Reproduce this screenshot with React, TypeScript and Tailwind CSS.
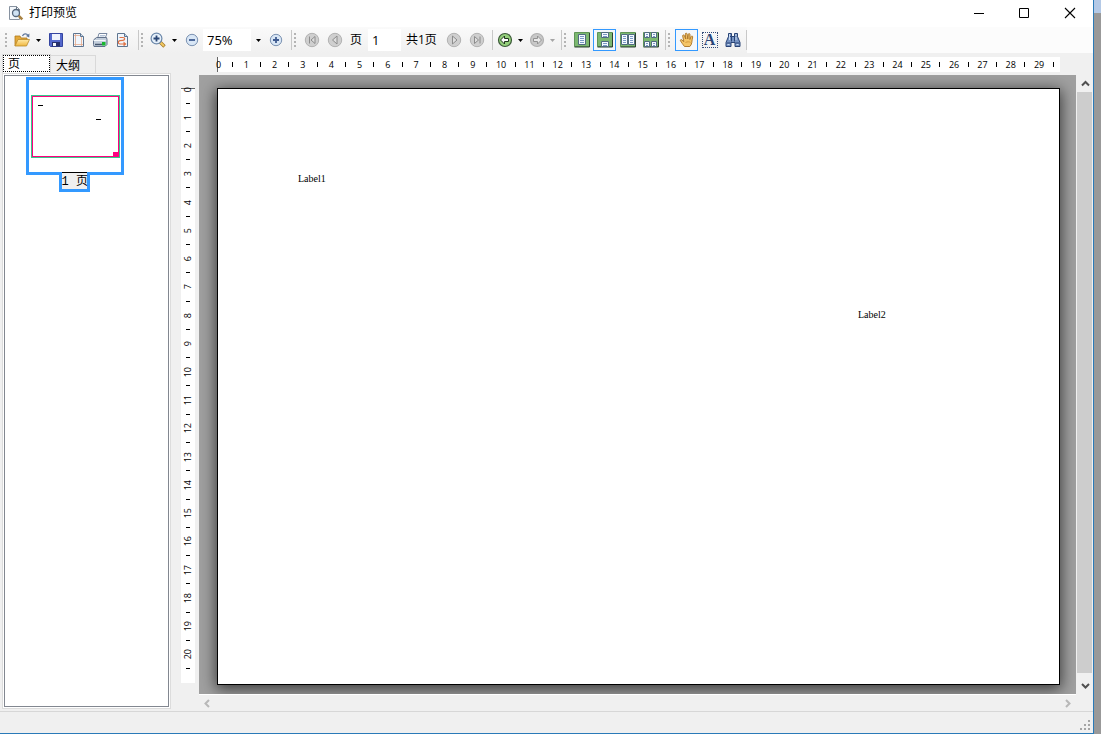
import React, { useState } from "react";

const UI = "font-['Open_Sans','Noto_Sans_CJK_SC',sans-serif]";

function Grip() {
  return (
    <span aria-hidden className="mx-px flex h-4 w-1 flex-col justify-between py-px">
      {[0, 1, 2, 3].map((i) => (
        <span key={i} className="h-0.5 w-0.5 bg-[#b4b4b4]" />
      ))}
    </span>
  );
}

function Separator() {
  return <span aria-hidden className="h-5 w-px shrink-0 bg-[#c8c8c8]" />;
}

function ToolButton({ label, active = false, disabled = false, children }: { label: string; active?: boolean; disabled?: boolean; children: React.ReactNode }) {
  return (
    <button
      type="button"
      aria-label={label}
      title={label}
      disabled={disabled}
      className={
        active
          ? "flex h-[22px] w-[23px] shrink-0 items-center justify-center border border-[#3399ff] bg-[#f4f8fc]"
          : "flex h-[22px] w-[23px] shrink-0 items-center justify-center"
      }
    >
      {children}
    </button>
  );
}

function Caret({ label, disabled = false }: { label: string; disabled?: boolean }) {
  return (
    <button type="button" aria-label={label} disabled={disabled} className="flex h-[22px] w-[11px] shrink-0 items-center justify-center">
      <svg width="5" height="3" viewBox="0 0 5 3">
        <path d="M0 0h5L2.500 3z" fill={disabled ? "#a5a5a5" : "#000"} />
      </svg>
    </button>
  );
}

function Svg({ children }: { children: React.ReactNode }) {
  return (
    <svg width="16" height="16" viewBox="0 0 16 16" fill="none" className="shrink-0">
      {children}
    </svg>
  );
}

function AppIcon() {
  return (
    <Svg>
      <path d="M1.500 1.500h7l3 3v10h-10z" fill="#f4f8fc" stroke="#8792a0" />
      <path d="M8.500 1.500v3h3" stroke="#6f7b87" />
      <circle cx="8" cy="8" r="3.500" fill="#cfe2f3" stroke="#55677c" strokeWidth="1.300" />
      <path d="m10.800 10.800 3.500 3.500" stroke="#a88243" strokeWidth="2.600" />
    </Svg>
  );
}

function OpenIcon() {
  return (
    <Svg>
      <path d="M1 14V4h5l1 2h6v3" fill="#e3a83a" stroke="#b07a1b" strokeWidth=".8" />
      <path d="m1 14 3-6.500h11.500L12.500 14z" fill="url(#folder)" stroke="#b98a2c" strokeWidth=".8" />
      <path d="M8.500 4c1-2.500 4-3 5.500-.5" stroke="#61789c" strokeWidth="1.300" />
      <path d="m15.500 1.500-.3 4-3.200-1.500z" fill="#61789c" />
      <defs>
        <linearGradient id="folder" x1="0" y1="0" x2="0" y2="1">
          <stop stopColor="#ffe9a6" />
          <stop offset="1" stopColor="#f0b73f" />
        </linearGradient>
      </defs>
    </Svg>
  );
}

function SaveIcon() {
  return (
    <Svg>
      <path d="M1.500 1.500h13v13h-12l-1-1z" fill="#5468cc" stroke="#3444a0" />
      <path d="M4 2h8v6H4z" fill="#eef2fc" />
      <path d="M4 10h8v4.500H4z" fill="#26306c" />
      <path d="M5 11h3v3H5z" fill="#f4f6fc" />
    </Svg>
  );
}

function PageSetupIcon() {
  return (
    <Svg>
      <path d="M3.500 1.500h7l3 3v10h-10z" fill="#f1f6fc" stroke="#5e7590" />
      <path d="M10.500 1.500v3h3" fill="#c8d8e8" stroke="#5e7590" />
      <path d="M5.500 2v12M11.500 5v9M4 3.500h6M4 12.500h9" stroke="#e5a98a" strokeWidth=".8" />
    </Svg>
  );
}

function PrintIcon() {
  return (
    <Svg>
      <path d="M5.500 6.500 7 1.500h8l-2 5z" fill="#fff" stroke="#7787a0" />
      <path d="M8 3.500h5M7.500 5h5" stroke="#9fb2cc" strokeWidth=".8" />
      <path d="m1.500 8 3-2.500h10l.5 2v5l-2 2h-11l-.5-2z" fill="#c3cedb" stroke="#61718a" />
      <path d="M1.500 8.500h12" stroke="#f5f8fb" />
      <path d="M3 12.500h7" stroke="#46566d" strokeWidth="1.500" />
      <path d="M10 10h3.500v3.500H10z" fill="#18b62f" />
    </Svg>
  );
}

function ExportIcon() {
  return (
    <Svg>
      <path d="M3.500 1.500h7l3 3v10h-10z" fill="#f1f6fc" stroke="#5e7590" />
      <path d="M10.500 1.500v3h3" fill="#c8d8e8" stroke="#5e7590" />
      <path d="M5.500 5.500H9c2.300 0 2.300 2.500 0 2.800l-3 .4c-2.500.5-2 3.300 0 3.300h4" stroke="#df7345" strokeWidth="1.200" />
      <path d="m9.500 9.500 3 2.500-3 2.500z" fill="#df7345" />
    </Svg>
  );
}

function ZoomIcon() {
  return (
    <Svg>
      <path d="m10 10 4.500 4.500" stroke="#a57b2b" strokeWidth="3.400" />
      <path d="m10.500 10.500 3.500 3.500" stroke="#f3ca63" strokeWidth="1.800" />
      <circle cx="6.500" cy="6.500" r="5.400" fill="#e6f0fa" stroke="#6b87a9" strokeWidth="1.200" />
      <path d="M3.500 6.500h6M6.500 3.500v6" stroke="#2a4675" strokeWidth="1.800" />
    </Svg>
  );
}

function StepIcon({ plus = false }: { plus?: boolean }) {
  return (
    <Svg>
      <circle cx="8" cy="8" r="5.700" fill="#d8e6f5" stroke="#7b92b2" />
      <path d={plus ? "M5 8h6M8 5v6" : "M5 8h6"} stroke="#3f5b90" strokeWidth="1.800" />
    </Svg>
  );
}

function NavIcon({ kind }: { kind: "first" | "prev" | "next" | "last" }) {
  const paths = {
    first: "M5.500 4.500v7M11 4.500v7L7 8z",
    prev: "M10 4v8L5.500 8z",
    next: "M6.500 4v8L11 8z",
    last: "M5.500 4.500v7l4-3.500zM11 4.500v7",
  };
  return (
    <Svg>
      <circle cx="8" cy="8" r="6.700" fill="#cfcfcf" stroke="#b2b2b2" />
      <path d={paths[kind]} fill="#dedede" stroke="#8c8c8c" />
    </Svg>
  );
}

function HistoryIcon({ forward = false }: { forward?: boolean }) {
  return (
    <Svg>
      <circle cx="8" cy="8" r="6.500" fill={forward ? "#c8c8c8" : "#94cf7b"} stroke={forward ? "#b0b0b0" : "#3c5a39"} strokeWidth="1.200" />
      <path
        d={forward ? "M12.500 8 8.500 4v2.500h-4v3h4V12z" : "M3.500 8l4-4v2.500h4v3h-4V12z"}
        fill={forward ? "#e9e9e9" : "#fff"}
        stroke={forward ? "#929292" : "#20351f"}
      />
    </Svg>
  );
}

function LayoutIcon({ kind }: { kind: "single" | "continuous" | "facing" | "facingContinuous" }) {
  const pages = {
    single: [[4.5, 2.5, 7, 10]],
    continuous: [[4.5, 0.5, 7, 5], [4.5, 9.5, 7, 5]],
    facing: [[1.5, 2.5, 6, 10], [8.5, 2.5, 6, 10]],
    facingContinuous: [[1.5, 0.5, 5, 5], [8.5, 0.5, 5, 5], [1.5, 9.5, 5, 5], [8.5, 9.5, 5, 5]],
  }[kind];
  return (
    <Svg>
      <path d="M.5.500h15v14H.5z" fill="#7cb870" stroke="#5f9457" />
      <path d="M.5 15h15V1" stroke="#2c4232" />
      {pages.map(([x, y, w, h]) => (
        <g key={`${x}-${y}`}>
          <path d={`M${x} ${y}h${w}v${h}h-${w}z`} fill="#f5f9ff" stroke="#506a80" />
          {[2, 4, 6, 8].filter((n) => n < h).map((n) => (
            <path key={n} d={`M${x + 1.5} ${y + n}h${w - 3}`} stroke="#7898c4" />
          ))}
        </g>
      ))}
    </Svg>
  );
}

function HandIcon() {
  return (
    <Svg>
      <path
        d="M5.500 14.500C3.500 12 2.500 10.500 1.500 8.800c-.5-1 .6-1.700 1.500-.8l1.800 1.700L3.700 4c-.2-1.200 1.300-1.500 1.700-.4L6.800 7 6.300 2.200c-.1-1.300 1.600-1.400 1.800-.2L8.800 7l.5-4.600c.1-1.200 1.700-1 1.700.2l-.1 4.900 1.200-3c.4-1 1.800-.5 1.600.5-.5 2-.7 3.800-.9 5.500-.2 1.800-1 3-2 4z"
        fill="#f4c567"
        stroke="#a87225"
        strokeWidth=".9"
      />
      <path d="M6.500 10.500c2-1 4-.8 5 0" stroke="#d59a3d" />
    </Svg>
  );
}

function TextIcon() {
  return (
    <span className="flex h-4 w-4 items-center justify-center border border-dotted border-[#334c78] font-['Liberation_Serif',serif] text-base leading-4 font-bold text-[#2b4678]">A</span>
  );
}

function BinocularsIcon() {
  return (
    <Svg>
      <path d="M3.500 1.500h3v3h3v-3h3v3l2.500 6v4h-5v-4h-4v4H1v-4l2.500-6z" fill="#7693c3" stroke="#294375" />
      <path d="M3.500 4.500h3v5M12.500 4.500h-3v5M1.500 11h4M10.500 11h4" stroke="#294375" />
      <path d="M4.500 2v6M11 2v6M2.500 12.500h2M11.500 12.500h2" stroke="#c9dcf3" />
    </Svg>
  );
}

function Ruler({ marks, vertical = false }: { marks: number; vertical?: boolean }) {
  const cells = Array.from({ length: marks }, (_, i) => i + 1);
  return (
    <div
      aria-hidden
      className={
        vertical
          ? "flex w-[14px] flex-col bg-white text-[9px] leading-3 text-black"
          : "flex h-[15px] bg-white text-[9px] leading-3 text-black"
      }
    >
      <span className={vertical ? "flex min-h-0 basis-0 grow items-start justify-center border-t border-[#666]" : "flex min-w-0 basis-0 grow items-center justify-start border-l border-[#666]"}>
        <span className={vertical ? "-mt-0.5 rotate-180 [writing-mode:vertical-rl]" : "-ml-0.5"}>0</span>
      </span>
      {cells.map((n) => (
        <span key={n} className={vertical ? "flex min-h-0 basis-0 grow-2 items-center justify-center" : "flex min-w-0 basis-0 grow-2 items-center justify-center"}>
          {n % 2 === 0 ? (
            <span className={vertical ? "rotate-180 [writing-mode:vertical-rl]" : ""}>{n / 2}</span>
          ) : (
            <span className={vertical ? "h-px w-1 bg-black" : "h-[5px] w-px bg-black"} />
          )}
        </span>
      ))}
      {vertical && <span className="min-h-0 basis-0 grow" />}
    </div>
  );
}

function Chevron({ d, color }: { d: string; color: string }) {
  return (
    <svg width="9" height="9" viewBox="0 0 9 9" fill="none">
      <path d={d} stroke={color} strokeWidth="2" />
    </svg>
  );
}

function TitleBar() {
  return (
    <header className="flex h-[27px] shrink-0 items-center bg-white pb-0.5 pl-2">
      <AppIcon />
      <h1 className="ml-[5px] flex-1 text-xs leading-4 text-black">打印预览</h1>
      <button type="button" aria-label="最小化" className="flex h-6 w-[45px] items-center justify-center">
        <svg width="10" height="10" viewBox="0 0 10 10"><path d="M0 5.500h10" stroke="#000" /></svg>
      </button>
      <button type="button" aria-label="最大化" className="flex h-6 w-[46px] items-center justify-center">
        <svg width="10" height="10" viewBox="0 0 10 10" fill="none"><path d="M.5.500h9v9h-9z" stroke="#000" /></svg>
      </button>
      <button type="button" aria-label="关闭" className="flex h-6 w-[46px] items-center justify-center">
        <svg width="12" height="12" viewBox="0 0 12 12"><path d="m1 1 10 10M11 1 1 11" stroke="#000" strokeWidth="1.100" /></svg>
      </button>
    </header>
  );
}

function Toolbar() {
  const [zoom, setZoom] = useState("75%");
  const [page, setPage] = useState("1");
  return (
    <div role="toolbar" className="flex h-[26px] shrink-0 items-center bg-[#fcfcfc] text-xs text-black">
      <div className="flex h-full items-center bg-linear-to-b from-[#fafafa] to-[#f0f0f0] pl-1">
        <Grip />
        <ToolButton label="打开"><OpenIcon /></ToolButton>
        <Caret label="打开选项" />
        <div className="flex -space-x-px">
          <ToolButton label="保存"><SaveIcon /></ToolButton>
          <ToolButton label="页面设置"><PageSetupIcon /></ToolButton>
          <ToolButton label="打印"><PrintIcon /></ToolButton>
          <ToolButton label="导出"><ExportIcon /></ToolButton>
        </div>
        <span className="w-[5px]" />
        <Separator />
        <span className="w-px" />
        <Grip />
        <ToolButton label="缩放"><ZoomIcon /></ToolButton>
        <Caret label="缩放选项" />
        <ToolButton label="缩小"><StepIcon /></ToolButton>
        <input aria-label="缩放比例" value={zoom} onChange={(e) => setZoom(e.target.value)} className="h-[22px] w-12 bg-white pl-1 text-[13px] outline-none" />
        <span className="w-0.5" />
        <Caret label="选择比例" />
        <ToolButton label="放大"><StepIcon plus /></ToolButton>
        <span className="w-1" />
        <Separator />
        <span className="w-px" />
        <Grip />
        <span className="w-px" />
        <ToolButton label="首页" disabled><NavIcon kind="first" /></ToolButton>
        <ToolButton label="上一页" disabled><NavIcon kind="prev" /></ToolButton>
        <label htmlFor="page-number" className="w-[22px] pl-1">页</label>
        <input id="page-number" value={page} onChange={(e) => setPage(e.target.value)} className="h-[22px] w-[33px] bg-white pl-1 text-[13px] outline-none" />
        <span className="w-[41px] pl-[5px] whitespace-nowrap">共1页</span>
        <ToolButton label="下一页" disabled><NavIcon kind="next" /></ToolButton>
        <ToolButton label="末页" disabled><NavIcon kind="last" /></ToolButton>
        <span className="w-1" />
        <Separator />
        <div className="flex -space-x-px">
          <ToolButton label="后退"><HistoryIcon /></ToolButton>
          <Caret label="后退历史" />
          <ToolButton label="前进" disabled><HistoryIcon forward /></ToolButton>
          <Caret label="前进历史" disabled />
        </div>
        <span className="w-[3px]" />
        <Separator />
        <span className="w-px" />
        <Grip />
        <span className="w-px" />
        <ToolButton label="单页"><LayoutIcon kind="single" /></ToolButton>
        <ToolButton label="连续" active><LayoutIcon kind="continuous" /></ToolButton>
        <ToolButton label="对开"><LayoutIcon kind="facing" /></ToolButton>
        <ToolButton label="连续对开"><LayoutIcon kind="facingContinuous" /></ToolButton>
        <span className="w-[3px]" />
        <Separator />
        <span className="w-px" />
        <Grip />
        <span className="w-0.5" />
        <ToolButton label="手形工具" active><HandIcon /></ToolButton>
        <ToolButton label="文本选择"><TextIcon /></ToolButton>
        <ToolButton label="查找"><BinocularsIcon /></ToolButton>
        <span className="w-0.5" />
        <Separator />
      </div>
    </div>
  );
}

function Sidebar() {
  return (
    <aside className="flex w-[171px] shrink-0 flex-col pb-0.5 pl-0.5">
      <div role="tablist" className="flex h-5 shrink-0 items-end text-xs leading-4 text-black">
        <button type="button" role="tab" aria-selected="true" className="flex h-[19px] w-[49px] items-start border-x border-t border-[#d9d9d9] bg-white text-left">
          <span className="h-[17px] w-full border border-dotted border-black pl-1 leading-[15px]">页</span>
        </button>
        <button type="button" role="tab" aria-selected="false" className="h-[18px] w-[45px] border-t border-r border-[#d9d9d9] pl-[5px] text-left leading-5">大纲</button>
      </div>
      <div className="flex flex-1 flex-col border border-[#dcdcdc] bg-white p-px">
        <div className="flex flex-1 flex-col border border-[#828790] bg-white pl-[21px]">
          <button type="button" className="mt-px flex w-[98px] flex-col items-center text-xs leading-[14px] text-black">
            <span className="flex h-[98px] w-full items-center justify-center border-[3px] border-[#3399ff] bg-white">
              <span className="block border border-[#36c98c]">
                <span className="relative block h-[61px] w-[87px] border border-[#ff007f]">
                  <span className="absolute top-[8px] left-[5px] h-px w-[5px] bg-black" />
                  <span className="absolute top-[22px] left-[63px] h-px w-[5px] bg-black" />
                  <span className="absolute right-0 bottom-0 h-1 w-[5px] bg-[#ff007f]" />
                </span>
              </span>
            </span>
            <span className="mr-0.5 -mt-[3px] h-5 w-[31px] border-x-[3px] border-b-[3px] border-[#3399ff] bg-[#f0f0f0] font-['Liberation_Mono','Noto_Sans_CJK_SC',monospace] whitespace-nowrap">
              <span className="block border-t border-black pt-px leading-[17px]">1 页</span>
            </span>
          </button>
        </div>
      </div>
    </aside>
  );
}

function Preview() {
  return (
    <main className="grid min-w-0 flex-1 grid-cols-[14px_minmax(0,1fr)_17px] grid-rows-[22px_minmax(0,1fr)_17px] pl-2.5">
      <div className="col-start-2 row-start-1 mt-1 mr-4 ml-[22px]">
        <Ruler marks={59} />
      </div>
      <div className="col-start-1 row-start-2 mt-[13px] mb-[11px] flex">
        <Ruler marks={41} vertical />
      </div>
      <section className="row-start-2 ml-1 flex overflow-hidden bg-[#a0a0a0] pt-[13px] pr-4 pb-[9px] pl-[18px]">
        <article className="relative flex-1 border border-black bg-white font-['Liberation_Serif',serif] text-[10px] leading-3 text-black shadow-[0_3px_14px_1px_rgba(0,0,0,0.65)]">
          <span className="absolute top-[84px] left-[80px]">Label1</span>
          <span className="absolute top-[220px] left-[640px]">Label2</span>
        </article>
      </section>
      <div className="row-start-2 ml-px flex flex-col bg-[#f0f0f0]">
        <button type="button" aria-label="向上滚动" className="flex h-[17px] items-center justify-center">
          <Chevron d="M1 6.500 4.500 3 8 6.500" color="#505050" />
        </button>
        <span className="mr-px flex-1 bg-[#cdcdcd]" />
        <button type="button" aria-label="向下滚动" className="flex h-[21px] items-center justify-center pt-1">
          <Chevron d="M1 3 4.500 6.500 8 3" color="#505050" />
        </button>
      </div>
      <div className="col-start-2 row-start-3 ml-1 flex items-center justify-between border-t border-white px-1">
        <button type="button" aria-label="向左滚动"><Chevron d="M6 1 2.500 4.500 6 8" color="#b8b8b8" /></button>
        <button type="button" aria-label="向右滚动"><Chevron d="M3 1 6.500 4.500 3 8" color="#b8b8b8" /></button>
      </div>
    </main>
  );
}

function StatusBar() {
  return (
    <footer className="flex h-[22px] shrink-0 items-end justify-end border-t border-[#d7d7d7] bg-[#f0f0f0] p-[3px]">
      <svg width="10" height="10" viewBox="0 0 10 10" fill="#a5a5a5">
        <path d="M8 0h2v2H8zM4 4h2v2H4zM8 4h2v2H8zM0 8h2v2H0zM4 8h2v2H4zM8 8h2v2H8z" />
      </svg>
    </footer>
  );
}

export default function App() {
  return (
    <div className={`${UI} flex h-screen w-full bg-[#999999]`}>
      <div className="flex min-w-0 flex-1 flex-col border-r border-b border-[#2a7ab8] bg-[#f0f0f0]">
        <TitleBar />
        <Toolbar />
        <div className="flex min-h-0 flex-1">
          <Sidebar />
          <Preview />
        </div>
        <StatusBar />
      </div>
      <div className="w-[7px] shrink-0">
        <div className="h-[13px] bg-[#b4c9e6]" />
      </div>
    </div>
  );
}
